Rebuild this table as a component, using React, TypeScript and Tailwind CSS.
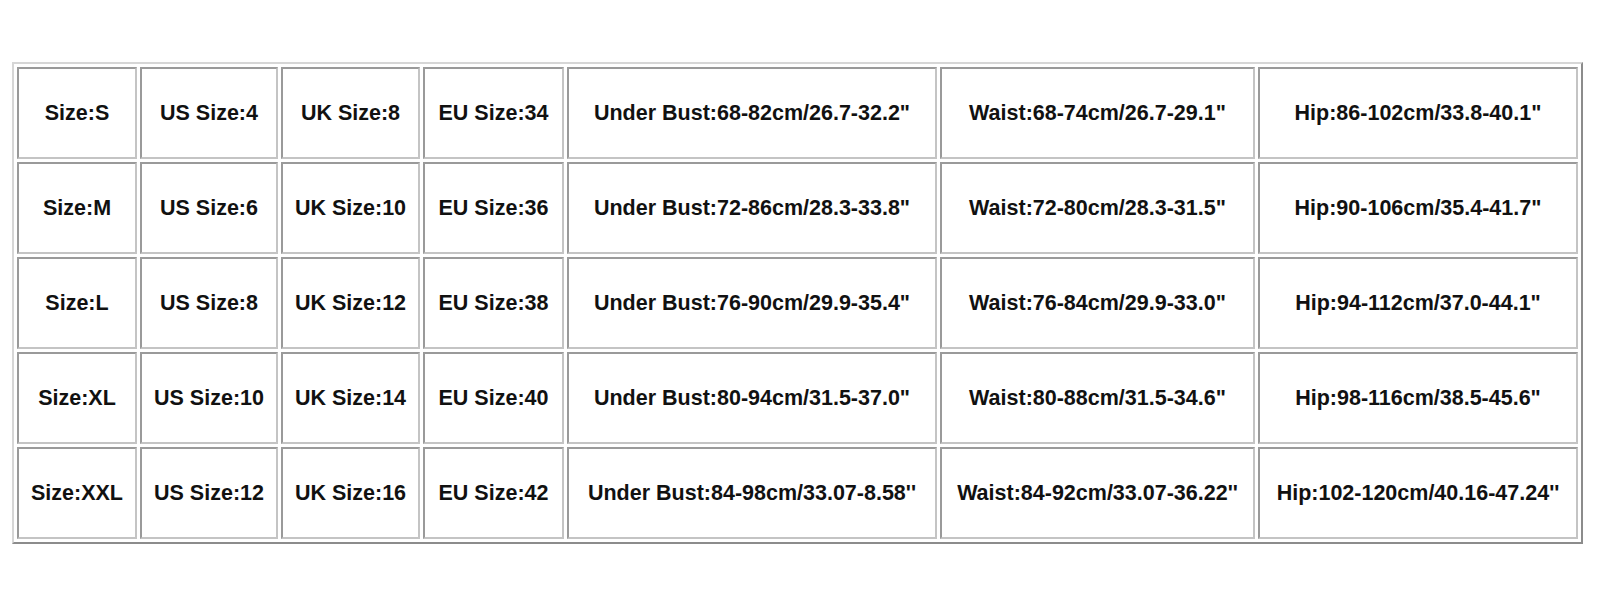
const rows: string[][] = [
  ['Size:S', 'US Size:4', 'UK Size:8', 'EU Size:34', 'Under Bust:68-82cm/26.7-32.2"', 'Waist:68-74cm/26.7-29.1"', 'Hip:86-102cm/33.8-40.1"'],
  ['Size:M', 'US Size:6', 'UK Size:10', 'EU Size:36', 'Under Bust:72-86cm/28.3-33.8"', 'Waist:72-80cm/28.3-31.5"', 'Hip:90-106cm/35.4-41.7"'],
  ['Size:L', 'US Size:8', 'UK Size:12', 'EU Size:38', 'Under Bust:76-90cm/29.9-35.4"', 'Waist:76-84cm/29.9-33.0"', 'Hip:94-112cm/37.0-44.1"'],
  ['Size:XL', 'US Size:10', 'UK Size:14', 'EU Size:40', 'Under Bust:80-94cm/31.5-37.0"', 'Waist:80-88cm/31.5-34.6"', 'Hip:98-116cm/38.5-45.6"'],
  ['Size:XXL', 'US Size:12', 'UK Size:16', 'EU Size:42', "Under Bust:84-98cm/33.07-8.58''", "Waist:84-92cm/33.07-36.22''", "Hip:102-120cm/40.16-47.24''"],
];

const colWidths = ['w-[120px]', 'w-[138px]', 'w-[139px]', 'w-[141px]', 'w-[370px]', 'w-[315px]', 'w-[320px]'];

export default function App() {
  return (
    <div className="min-h-screen bg-white pt-[62px] pl-[12px] font-['Liberation_Sans',Arial,sans-serif]">
      {/* size chart table */}
      <table className="table-fixed border-separate border-spacing-x-[3px] border-spacing-y-[3.5px] border-2 border-t-[#d6d6d6] border-l-[#d6d6d6] border-r-[#8c8c8c] border-b-[#8c8c8c]">
        <colgroup>
          {colWidths.map((w, i) => (
            <col key={i} className={w} />
          ))}
        </colgroup>
        <tbody>
          {rows.map((row, r) => (
            <tr key={r}>
              {row.map((cell, c) => (
                <td
                  key={c}
                  className={`${colWidths[c]} h-[92px] p-0 text-center align-middle text-[21.5px] font-bold text-[#111] whitespace-nowrap border-2 border-t-[#9a9a9a] border-l-[#9a9a9a] border-r-[#c4c4c4] border-b-[#c4c4c4]`}
                >
                  {cell}
                </td>
              ))}
            </tr>
          ))}
        </tbody>
      </table>
    </div>
  );
}
